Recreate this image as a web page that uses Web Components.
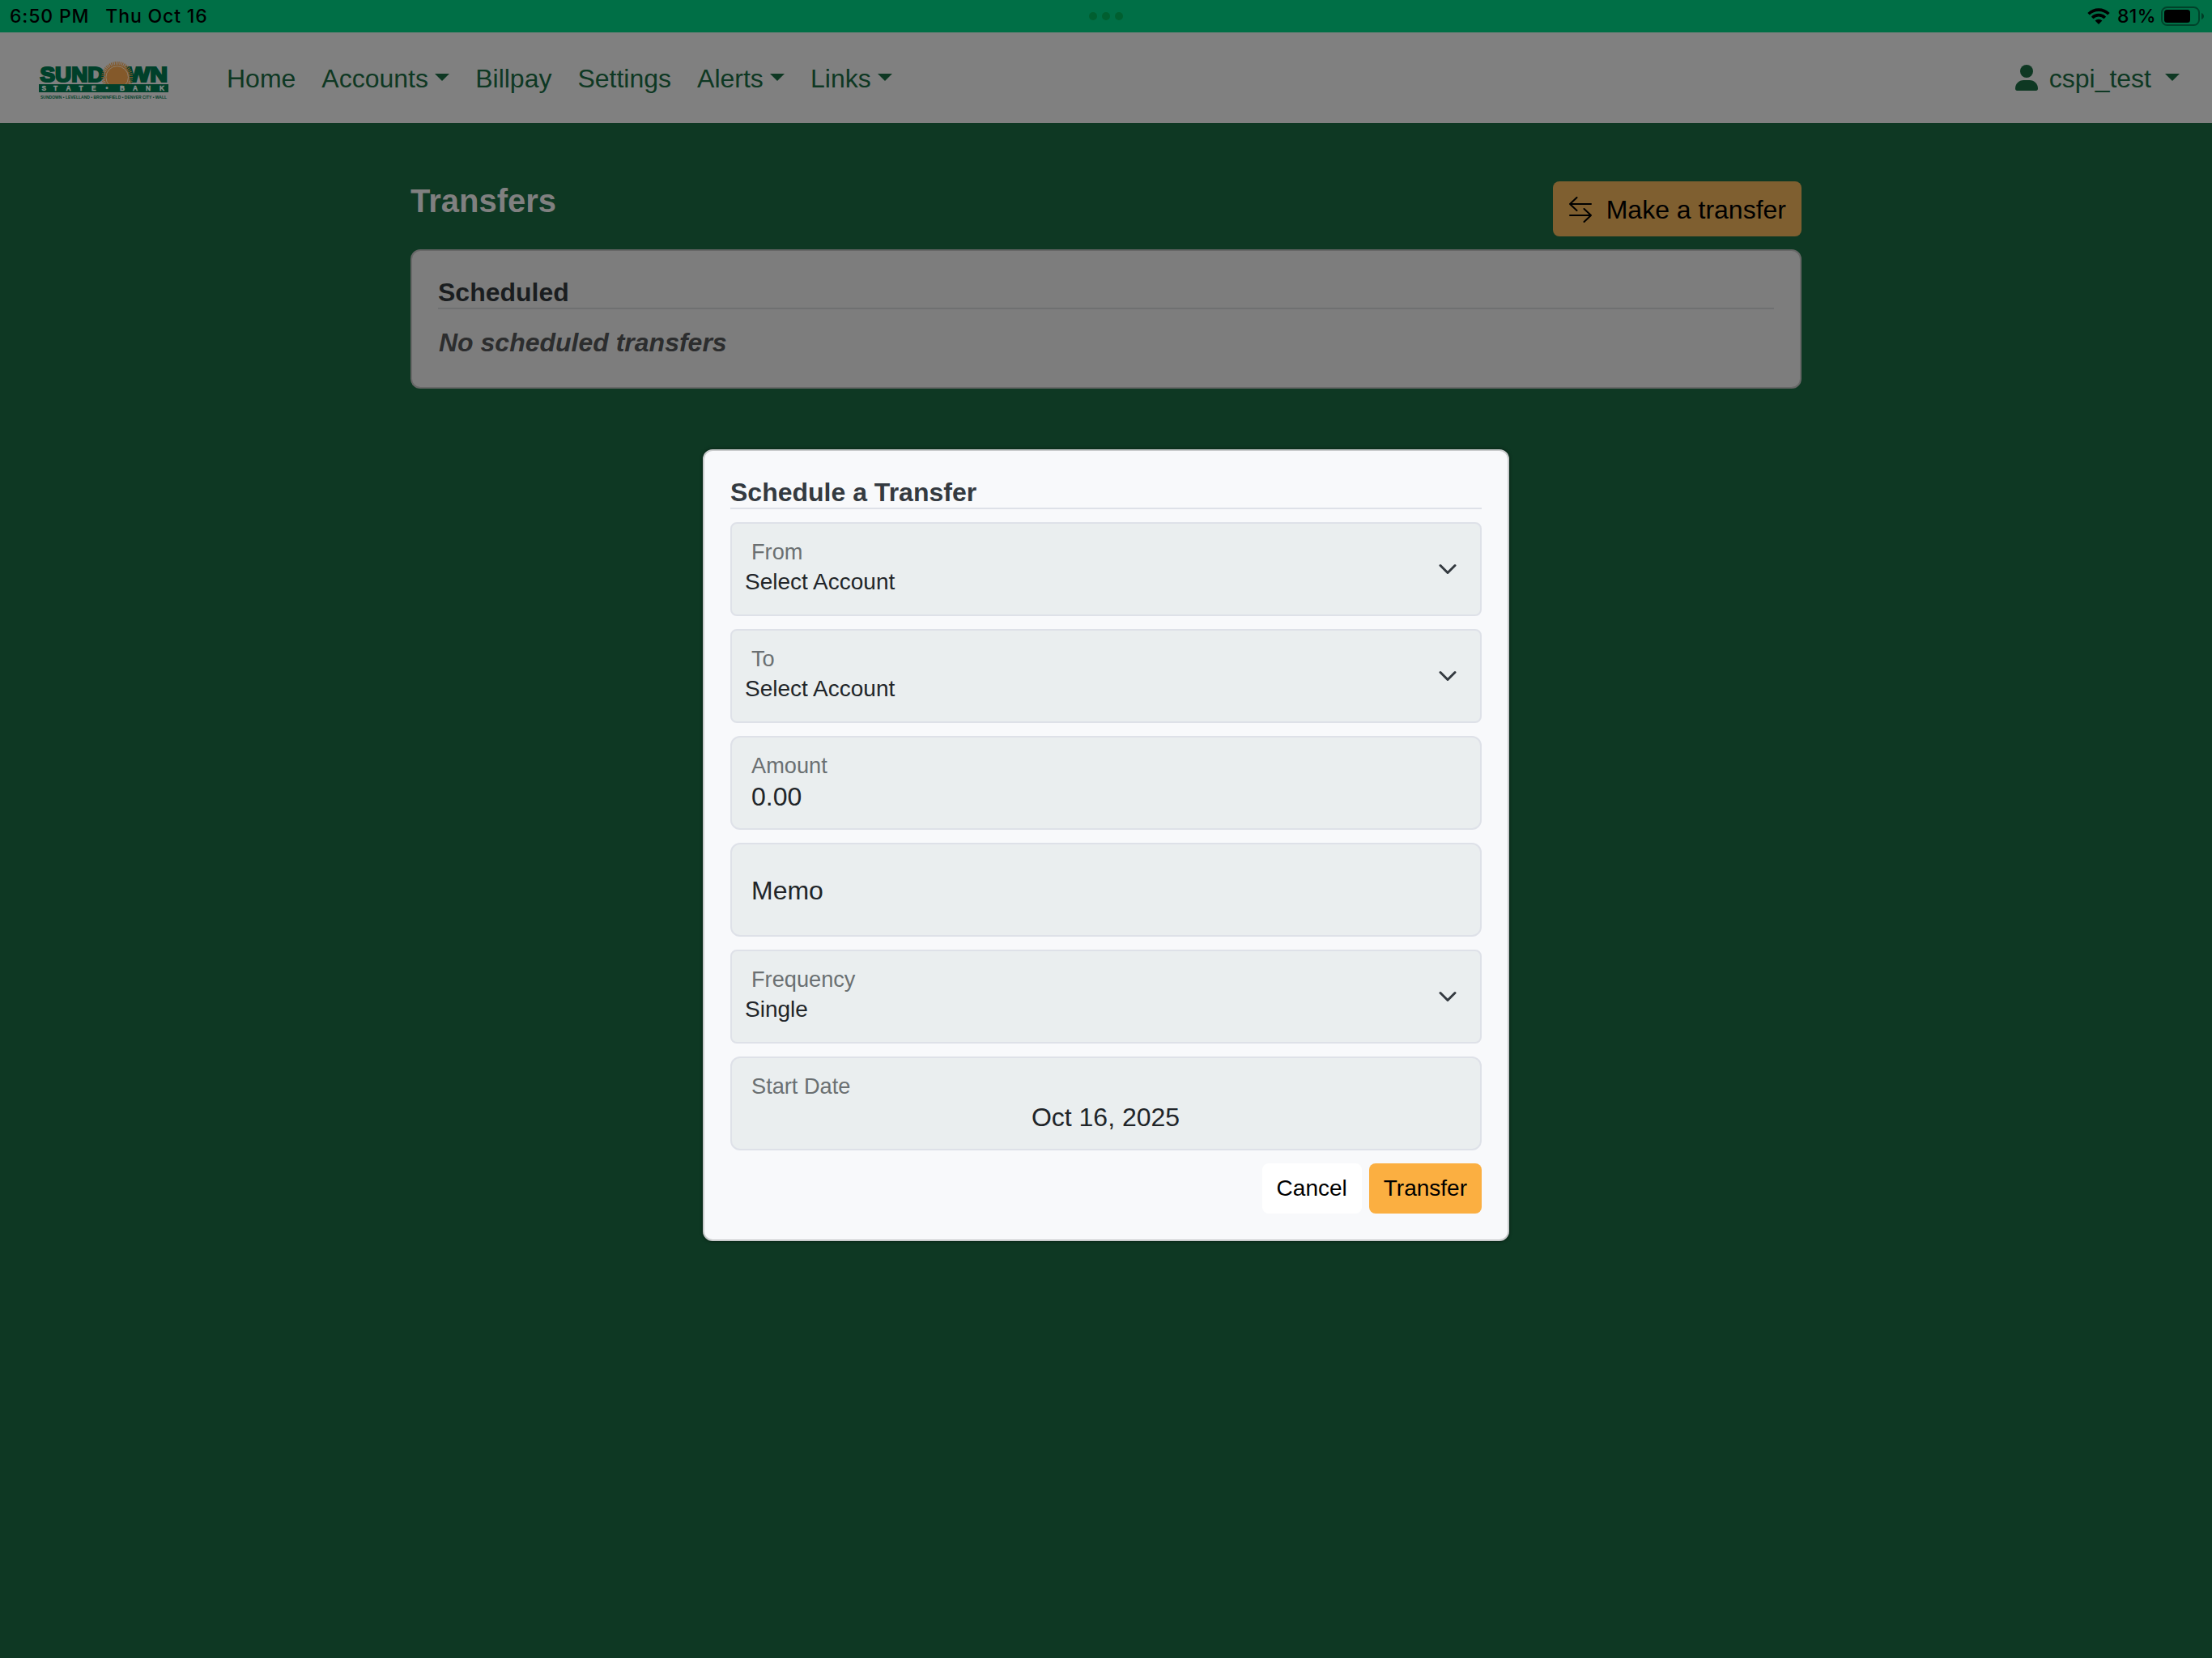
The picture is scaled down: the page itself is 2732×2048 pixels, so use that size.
<!DOCTYPE html>
<html lang="en">
<head>
<meta charset="utf-8">
<title>Transfers</title>
<style>
  body {
    margin: 0;
    font-family: "Liberation Sans", Arial, sans-serif;
    font-size: 32px;
    line-height: 48px;
    color: #212529;
  }
</style>
</head>
<body>
<bank-app></bank-app>

<script>
class StatusBar extends HTMLElement {
  constructor() {
    super();
    this.attachShadow({ mode: "open" });
    this.shadowRoot.innerHTML = `
      <style>
        :host {
          display: grid;
          grid-template-columns: 1fr auto 1fr;
          align-items: center;
          height: 40px;
          box-sizing: border-box;
          padding: 0 10px;
          background: #006f46;
          color: #000;
          font: 500 23px/40px Inter, sans-serif;
        }
        .left, .right {
          display: flex;
          align-items: center;
          white-space: nowrap;
        }
        .left { gap: 20px; padding-left: 2px; letter-spacing: 0.85px; }
        .right { justify-content: flex-end; letter-spacing: 0.4px; }
        .dots { display: flex; gap: 6px; }
        .dots i {
          width: 10px;
          height: 10px;
          border-radius: 50%;
          background: #005f30;
        }
        .wifi { margin-right: 9px; }
        .battery { margin-left: 6px; }
        svg { display: block; }
      </style>
      <div class="left"><span>6:50 PM</span><span>Thu Oct 16</span></div>
      <div class="dots"><i></i><i></i><i></i></div>
      <div class="right">
        <svg class="wifi" width="28" height="20" viewBox="0 0 28 20">
          <g fill="none" stroke="#000" stroke-width="3.6">
            <path d="M1.6 7.2a17.6 17.6 0 0 1 24.8 0"/>
            <path d="M6.2 11.9a11 11 0 0 1 15.6 0"/>
          </g>
          <path d="M14 20l-4.4-4.5a6.2 6.2 0 0 1 8.8 0z"/>
        </svg>
        <span>81%</span>
        <svg class="battery" width="53" height="24" viewBox="0 0 53 24">
          <rect x="1" y="1" width="46" height="22" rx="6.5" fill="none" stroke="#000" stroke-opacity=".4" stroke-width="2"/>
          <rect x="4" y="4" width="32" height="16" rx="3.5"/>
          <path d="M50 8c4 1.6 4 6.4 0 8z" fill-opacity=".45"/>
        </svg>
      </div>
    `;
  }
}

class BankLogo extends HTMLElement {
  constructor() {
    super();
    this.attachShadow({ mode: "open" });
    this.render();
  }
  render() {
    let rays = "";
    for (let a = -30; a <= 210; a += 7.5) {
      const r = (a * Math.PI) / 180;
      const x = 96.7 + Math.cos(r) * 19.5;
      const y = 19.5 - Math.sin(r) * 19.5;
      rays += `M96.7 19.5L${x.toFixed(1)} ${y.toFixed(1)}`;
    }
    this.shadowRoot.innerHTML = `
      <style>
        :host { display: block; width: 160px; height: 48px; }
        svg { display: block; overflow: visible; }
        text { font-family: "Liberation Sans", sans-serif; font-weight: bold; }
      </style>
      <svg width="160" height="48" viewBox="0 0 160 48">
        <g fill="#00402a" stroke="#00402a" stroke-width="2.2">
          <text x="1.5" y="25" font-size="26.5" textLength="79" lengthAdjust="spacingAndGlyphs">SUND</text>
          <text x="109" y="25" font-size="26.5" textLength="50" lengthAdjust="spacingAndGlyphs">WN</text>
        </g>
        <path d="${rays}" stroke="#84592a" stroke-width="1.2"/>
        <circle cx="96.7" cy="19.5" r="15.5" fill="#84592a"/>
        <circle cx="96.7" cy="19.5" r="13.8" fill="none" stroke="#8c8376" stroke-width=".9"/>
        <rect y="28" width="160" height="20" fill="#808080"/>
        <rect y="28" width="160" height="10" fill="#00402a"/>
        <g fill="#8a8f8c" stroke="#8a8f8c" stroke-width=".4" font-size="8.4">
          <text x="3.5" y="36">S</text>
          <text x="18" y="36">T</text>
          <text x="33.5" y="36">A</text>
          <text x="49.5" y="36">T</text>
          <text x="65" y="36">E</text>
          <text x="82.5" y="36">•</text>
          <text x="100" y="36">B</text>
          <text x="116" y="36">A</text>
          <text x="132" y="36">N</text>
          <text x="149" y="36">K</text>
        </g>
        <text x="2" y="46" fill="#00402a" font-size="5.2" textLength="156" lengthAdjust="spacingAndGlyphs">SUNDOWN • LEVELLAND • BROWNFIELD • DENVER CITY • WALL</text>
      </svg>
    `;
  }
}

class NavLink extends HTMLElement {
  constructor() {
    super();
    this.attachShadow({ mode: "open" });
    // no whitespace after the slot, it would widen the gap before the caret
    this.shadowRoot.innerHTML = `
      <style>
        :host { display: block; white-space: nowrap; color: #0e3823; }
        :host([dropdown])::after {
          content: "";
          display: inline-block;
          margin-left: var(--caret-gap, 8.2px);
          vertical-align: 8.2px;
          border-top: 9.6px solid;
          border-left: 9.6px solid transparent;
          border-right: 9.6px solid transparent;
        }
      </style><slot></slot>`;
  }
}

class NavBar extends HTMLElement {
  constructor() {
    super();
    this.attachShadow({ mode: "open" });
    this.shadowRoot.innerHTML = `
      <style>
        :host {
          display: flex;
          align-items: center;
          height: 112px;
          box-sizing: border-box;
          padding: 2px 40px 0 48px;
          background: #808080;
        }
        nav { display: flex; gap: 32px; margin-left: 72px; }
        .user {
          display: flex;
          align-items: center;
          gap: 14px;
          margin-left: auto;
          --caret-gap: 17px;
        }
        bank-logo { margin-top: 6px; }
        svg { display: block; fill: #0e3823; margin-top: -3px; }
      </style>
      <bank-logo></bank-logo>
      <nav>
        <nav-link>Home</nav-link>
        <nav-link dropdown>Accounts</nav-link>
        <nav-link>Billpay</nav-link>
        <nav-link>Settings</nav-link>
        <nav-link dropdown>Alerts</nav-link>
        <nav-link dropdown>Links</nav-link>
      </nav>
      <div class="user">
        <svg width="28" height="32" viewBox="0 0 28 32">
          <circle cx="14" cy="8" r="8"/>
          <path d="M10.5 19h7C23.5 19 28 23.5 28 29.5c0 1.5-1 2.5-2.2 2.5H2.2C1 32 0 31 0 29.5 0 23.5 4.5 19 10.5 19z"/>
        </svg>
        <nav-link dropdown>cspi_test</nav-link>
      </div>
    `;
  }
}

class AppButton extends HTMLElement {
  constructor() {
    super();
    this.attachShadow({ mode: "open" });
    this.shadowRoot.innerHTML = `
      <style>
        :host { display: block; }
        button {
          display: flex;
          align-items: center;
          box-sizing: border-box;
          height: 62px;
          padding: 0 18px;
          border: none;
          border-radius: 8px;
          background: #fff;
          color: #000;
          font: 28px/42px "Liberation Sans", Arial, sans-serif;
          white-space: nowrap;
        }
        :host([primary]) button { background: #fbaf41; }
        :host([large]) button {
          height: 68px;
          padding: 2px 19px 0 20px;
          background: #7f5f30;
          font-size: 32px;
          line-height: 48px;
        }
      </style>
      <button><slot name="icon"></slot><slot></slot></button>
    `;
  }
}

class TitledCard extends HTMLElement {
  constructor() {
    super();
    this.attachShadow({ mode: "open" });
    this.shadowRoot.innerHTML = `
      <style>
        :host {
          display: block;
          box-sizing: border-box;
          padding: 32px;
          border: 2px solid var(--card-border, #c9cbcc);
          border-radius: 12px;
          background: var(--card-bg, #f8f9fb);
        }
        h5 {
          margin: 0 0 16px;
          font-size: 32px;
          line-height: 38px;
          border-bottom: 2px solid var(--card-line, #dee1e8);
          color: var(--card-title, #343a40);
        }
      </style>
      <h5>${this.getAttribute("heading")}</h5>
      <slot></slot>
    `;
  }
}

class FormField extends HTMLElement {
  constructor() {
    super();
    this.attachShadow({ mode: "open" });
    const label = this.getAttribute("label");
    const value = this.getAttribute("value");
    const type = this.getAttribute("type");
    this.shadowRoot.innerHTML = `
      <style>
        :host { display: block; }
        .field {
          display: flex;
          align-items: center;
          box-sizing: border-box;
          height: 116px;
          padding: 0 28px 0 24px;
          border: 2px solid #dee1e8;
          border-radius: 12px;
          background: #eaeeef;
        }
        .select { border-radius: 8px; }
        .text { flex: 1; align-self: flex-start; padding-top: 18px; }
        label {
          display: block;
          font-size: 27.2px;
          line-height: 34px;
          color: #6b7072;
        }
        .value { line-height: 42px; }
        .select .value { font-size: 28px; line-height: 40px; margin-left: -8px; }
        .date .value { text-align: center; margin-right: -3px; }
        .empty { padding-top: 2px; }
        svg { display: block; }
      </style>
      <div class="field ${type}">
        ${
          value
            ? `<div class="text"><label>${label}</label><div class="value">${value}</div></div>`
            : `<div class="empty">${label}</div>`
        }
        ${
          type === "select"
            ? `<svg width="24" height="24" viewBox="0 0 16 16"><path fill="none" stroke="#343a40" stroke-linecap="round" stroke-linejoin="round" stroke-width="2" d="m2 5 6 6 6-6"/></svg>`
            : ""
        }
      </div>
    `;
  }
}

class TransferDialog extends HTMLElement {
  constructor() {
    super();
    this.attachShadow({ mode: "open" });
    this.shadowRoot.innerHTML = `
      <style>
        :host {
          position: absolute;
          inset: 40px 0 0 0;
          display: flex;
          align-items: center;
          justify-content: center;
        }
        titled-card { width: 996px; height: 978px; box-shadow: 0 0 4px rgba(0, 0, 0, 0.5); }
        .form { display: flex; flex-direction: column; gap: 16px; }
        .actions { display: flex; justify-content: flex-end; gap: 9px; }
      </style>
      <titled-card heading="Schedule a Transfer">
        <div class="form">
          <form-field type="select" label="From" value="Select Account"></form-field>
          <form-field type="select" label="To" value="Select Account"></form-field>
          <form-field type="input" label="Amount" value="0.00"></form-field>
          <form-field type="input" label="Memo"></form-field>
          <form-field type="select" label="Frequency" value="Single"></form-field>
          <form-field type="date" label="Start Date" value="Oct 16, 2025"></form-field>
          <div class="actions">
            <app-button>Cancel</app-button>
            <app-button primary>Transfer</app-button>
          </div>
        </div>
      </titled-card>
    `;
  }
}

class BankApp extends HTMLElement {
  constructor() {
    super();
    this.attachShadow({ mode: "open" });
    this.shadowRoot.innerHTML = `
      <style>
        :host {
          display: block;
          position: relative;
          height: 2048px;
          overflow: hidden;
          background: #0e3823;
        }
        main { width: 1718px; margin: 0 auto; padding-top: 72px; }
        header {
          display: flex;
          justify-content: space-between;
          align-items: flex-start;
          margin-bottom: 16px;
        }
        h4 { margin: 0; font-size: 40px; line-height: 48px; color: #808080; }
        titled-card {
          height: 172px;
          --card-bg: #7d7d7d;
          --card-border: #676767;
          --card-line: #6f7071;
          --card-title: #1a1d20;
        }
        em { display: block; padding: 1px 0 0 1px; font-weight: bold; color: #2c2d2e; }
        svg { display: block; margin-right: 18px; }
      </style>
      <status-bar></status-bar>
      <nav-bar></nav-bar>
      <main>
        <header>
          <h4>Transfers</h4>
          <app-button large>
            <svg slot="icon" width="28" height="32" viewBox="0 0 28 32" fill="none" stroke="#000" stroke-width="2" stroke-linecap="round" stroke-linejoin="round">
              <path d="M27 9H1M9.5 1L1 9l8.500 8M1 23h26M18.500 15l8.500 8-8.500 8"/>
            </svg>
            Make a transfer
          </app-button>
        </header>
        <titled-card heading="Scheduled"><em>No scheduled transfers</em></titled-card>
      </main>
      <transfer-dialog></transfer-dialog>
    `;
  }
}

customElements.define("status-bar", StatusBar);
customElements.define("bank-logo", BankLogo);
customElements.define("nav-link", NavLink);
customElements.define("nav-bar", NavBar);
customElements.define("app-button", AppButton);
customElements.define("titled-card", TitledCard);
customElements.define("form-field", FormField);
customElements.define("transfer-dialog", TransferDialog);
customElements.define("bank-app", BankApp);
</script>
</body>
</html>
